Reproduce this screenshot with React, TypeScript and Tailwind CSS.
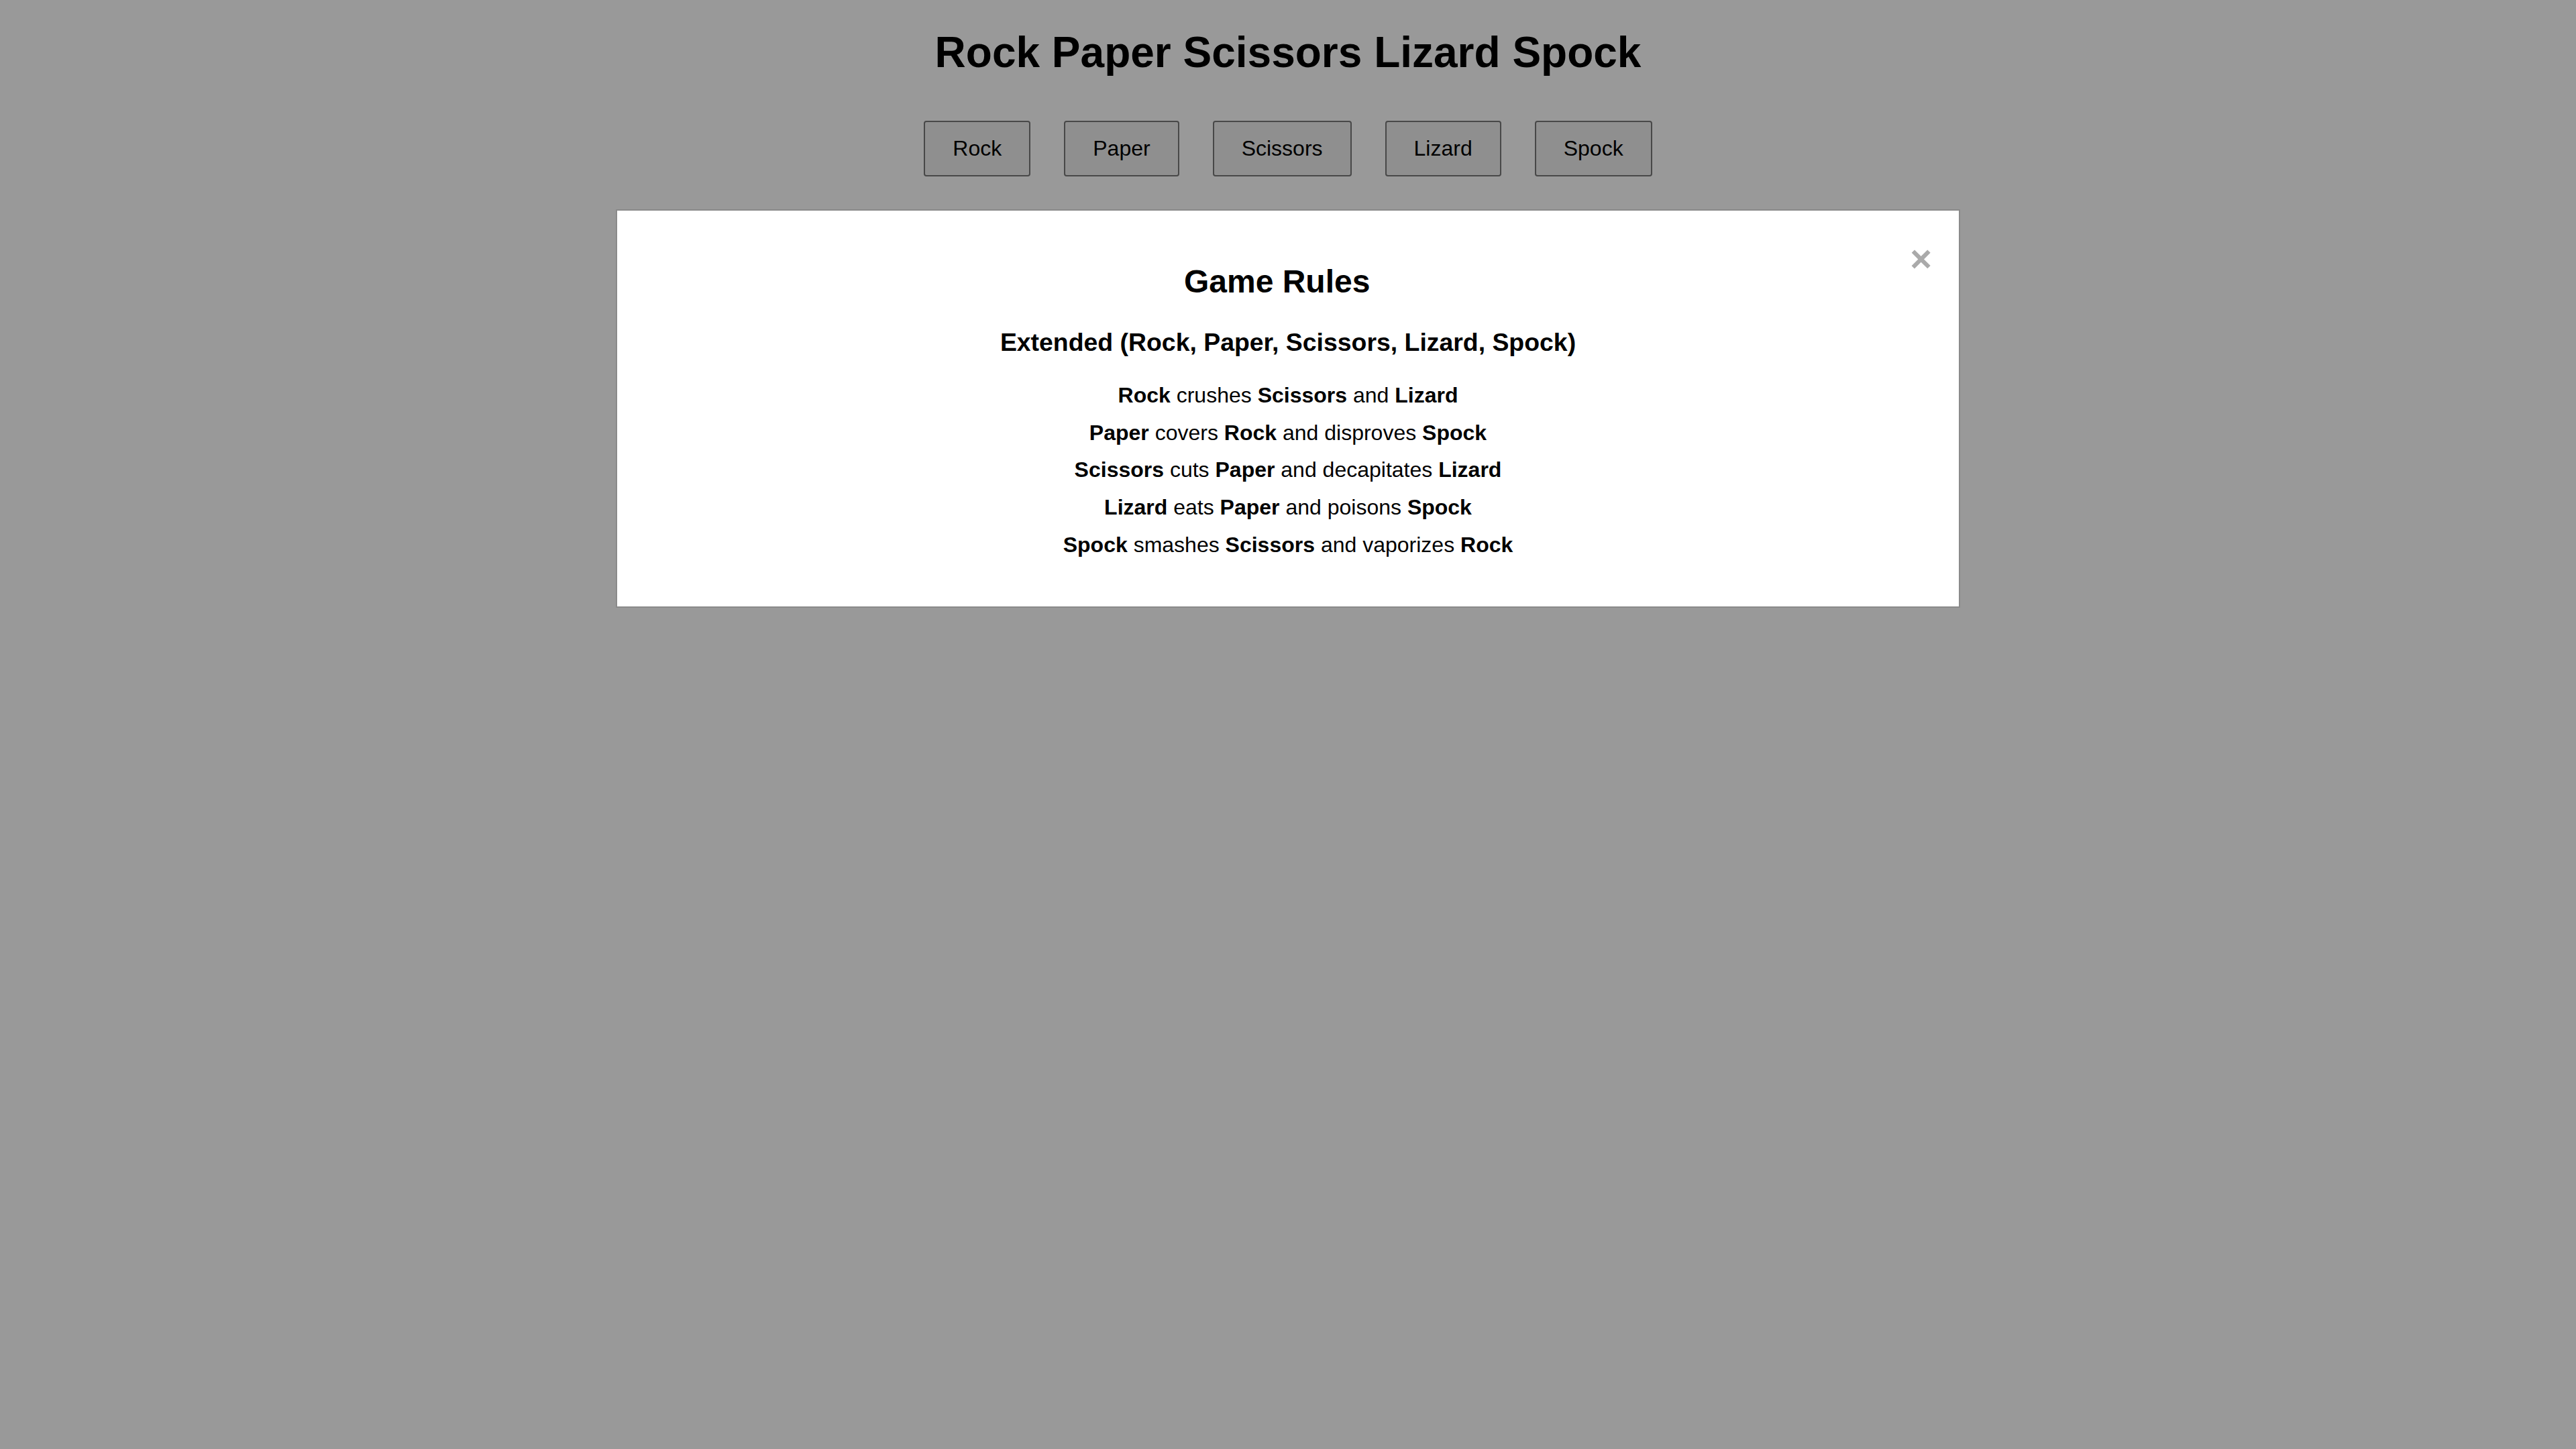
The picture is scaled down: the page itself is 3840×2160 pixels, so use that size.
const choices = ["Rock", "Paper", "Scissors", "Lizard", "Spock"];

const rules: [string, string, string, string, string][] = [
  ["Rock", "crushes", "Scissors", "and", "Lizard"],
  ["Paper", "covers", "Rock", "and disproves", "Spock"],
  ["Scissors", "cuts", "Paper", "and decapitates", "Lizard"],
  ["Lizard", "eats", "Paper", "and poisons", "Spock"],
  ["Spock", "smashes", "Scissors", "and vaporizes", "Rock"],
];

export default function App() {
  return (
    <div className="min-h-screen bg-[#999999] pt-[42px] font-['Liberation_Sans',Arial,sans-serif] text-black">
      <h1 className="text-center text-[64px] font-bold leading-[73.6px]">
        Rock Paper Scissors Lizard Spock
      </h1>

      <div className="mt-[64px] flex justify-center gap-[50px]">
        {choices.map((c) => (
          <button
            key={c}
            className="h-[83px] rounded-[4px] border-2 border-[#484848] bg-[#8f8f8f] px-[41px] text-[32px] leading-[37px] text-black"
          >
            {c}
          </button>
        ))}
      </div>

      <div className="mx-auto mt-[49px] w-[2004px] border-2 border-[#8a8a8a] bg-white px-[40px] pt-[40px] pb-[73px] text-center">
        <span className="float-right cursor-pointer text-[56px] font-bold leading-[64.3px] text-[#aaaaaa]">
          ×
        </span>
        <h2 className="mt-[38px] text-[48px] font-bold leading-[55.15px]">Game Rules</h2>
        <h3 className="mt-[42px] text-[37.4px] font-bold leading-[43px]">
          Extended (Rock, Paper, Scissors, Lizard, Spock)
        </h3>
        <div className="mt-[39px] flex flex-col gap-[19px]">
          {rules.map(([a, v1, b, v2, c], i) => (
            <p key={i} className="text-[32px] leading-[36.8px]">
              <b className="font-bold">{a}</b> {v1} <b className="font-bold">{b}</b> {v2}{" "}
              <b className="font-bold">{c}</b>
            </p>
          ))}
        </div>
      </div>
    </div>
  );
}
